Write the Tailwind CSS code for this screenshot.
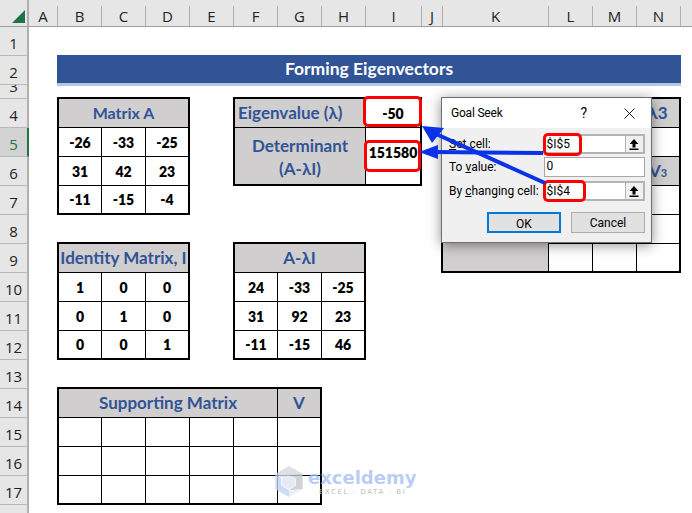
<!doctype html>
<html>
<head>
  <meta charset="UTF-8">
  <script src="https://cdn.jsdelivr.net/npm/@tailwindcss/browser@4"></script>
</head>
<body class="bg-white">

<div class="relative w-[692px] h-[513px] overflow-hidden bg-white [font-family:Lato,sans-serif] grid grid-cols-[29px_29px_repeat(7,44px)_56px_21px_106px_repeat(3,44px)_1fr] grid-rows-[27px_29px_29px_14px_repeat(14,29px)_1fr]">

  <!-- column headers -->
  <div class="row-start-1 col-start-1 bg-[#e6e6e6] border-r-2 border-b border-r-[#b0b0b0] border-b-[#9f9f9f] relative">
    <div class="absolute right-[2px] bottom-[3px] w-0 h-0 border-l-[13px] border-b-[13px] border-l-transparent border-b-[#217346]"></div>
  </div>
  <div class="row-start-1 col-start-2 flex items-center justify-center pt-[6px] bg-[#e6e6e6] border-r border-b border-r-[#b0b0b0] border-b-[#9f9f9f] text-[#222] text-[15px] [font-family:'Open_Sans',sans-serif]">A</div>
  <div class="row-start-1 col-start-3 flex items-center justify-center pt-[6px] bg-[#e6e6e6] border-r border-b border-r-[#b0b0b0] border-b-[#9f9f9f] text-[#222] text-[15px] [font-family:'Open_Sans',sans-serif]">B</div>
  <div class="row-start-1 col-start-4 flex items-center justify-center pt-[6px] bg-[#e6e6e6] border-r border-b border-r-[#b0b0b0] border-b-[#9f9f9f] text-[#222] text-[15px] [font-family:'Open_Sans',sans-serif]">C</div>
  <div class="row-start-1 col-start-5 flex items-center justify-center pt-[6px] bg-[#e6e6e6] border-r border-b border-r-[#b0b0b0] border-b-[#9f9f9f] text-[#222] text-[15px] [font-family:'Open_Sans',sans-serif]">D</div>
  <div class="row-start-1 col-start-6 flex items-center justify-center pt-[6px] bg-[#e6e6e6] border-r border-b border-r-[#b0b0b0] border-b-[#9f9f9f] text-[#222] text-[15px] [font-family:'Open_Sans',sans-serif]">E</div>
  <div class="row-start-1 col-start-7 flex items-center justify-center pt-[6px] bg-[#e6e6e6] border-r border-b border-r-[#b0b0b0] border-b-[#9f9f9f] text-[#222] text-[15px] [font-family:'Open_Sans',sans-serif]">F</div>
  <div class="row-start-1 col-start-8 flex items-center justify-center pt-[6px] bg-[#e6e6e6] border-r border-b border-r-[#b0b0b0] border-b-[#9f9f9f] text-[#222] text-[15px] [font-family:'Open_Sans',sans-serif]">G</div>
  <div class="row-start-1 col-start-9 flex items-center justify-center pt-[6px] bg-[#e6e6e6] border-r border-b border-r-[#b0b0b0] border-b-[#9f9f9f] text-[#222] text-[15px] [font-family:'Open_Sans',sans-serif]">H</div>
  <div class="row-start-1 col-start-10 flex items-center justify-center pt-[6px] bg-[#e6e6e6] border-r border-b border-r-[#b0b0b0] border-b-[#9f9f9f] text-[#222] text-[15px] [font-family:'Open_Sans',sans-serif]">I</div>
  <div class="row-start-1 col-start-11 flex items-center justify-center pt-[6px] bg-[#e6e6e6] border-r border-b border-r-[#b0b0b0] border-b-[#9f9f9f] text-[#222] text-[15px] [font-family:'Open_Sans',sans-serif]">J</div>
  <div class="row-start-1 col-start-12 flex items-center justify-center pt-[6px] bg-[#e6e6e6] border-r border-b border-r-[#b0b0b0] border-b-[#9f9f9f] text-[#222] text-[15px] [font-family:'Open_Sans',sans-serif]">K</div>
  <div class="row-start-1 col-start-13 flex items-center justify-center pt-[6px] bg-[#e6e6e6] border-r border-b border-r-[#b0b0b0] border-b-[#9f9f9f] text-[#222] text-[15px] [font-family:'Open_Sans',sans-serif]">L</div>
  <div class="row-start-1 col-start-14 flex items-center justify-center pt-[6px] bg-[#e6e6e6] border-r border-b border-r-[#b0b0b0] border-b-[#9f9f9f] text-[#222] text-[15px] [font-family:'Open_Sans',sans-serif]">M</div>
  <div class="row-start-1 col-start-15 flex items-center justify-center pt-[6px] bg-[#e6e6e6] border-r border-b border-r-[#b0b0b0] border-b-[#9f9f9f] text-[#222] text-[15px] [font-family:'Open_Sans',sans-serif]">N</div>
  <div class="row-start-1 col-start-16 bg-[#e6e6e6] border-b border-b-[#9f9f9f]"></div>
  <!-- separators don't reach the top of the header -->
  <div class="row-start-1 col-start-2 col-end-17 self-start h-[6px] bg-[#e6e6e6] z-10"></div>

  <!-- row headers -->
  <div class="row-start-2 col-start-1 flex items-center justify-center pt-[5px] bg-[#e6e6e6] border-r-2 border-b border-r-[#b0b0b0] border-b-[#b8b8b8] text-[#222] text-[15px] [font-family:'Open_Sans',sans-serif]">1</div>
  <div class="row-start-3 col-start-1 flex items-center justify-center pt-[5px] bg-[#e6e6e6] border-r-2 border-b border-r-[#b0b0b0] border-b-[#b8b8b8] text-[#222] text-[15px] [font-family:'Open_Sans',sans-serif]">2</div>
  <div class="row-start-4 col-start-1 flex items-center justify-center pb-[10px] overflow-hidden bg-[#e6e6e6] border-r-2 border-b border-r-[#b0b0b0] border-b-[#b8b8b8] text-[#222] text-[15px] [font-family:'Open_Sans',sans-serif]">3</div>
  <div class="row-start-5 col-start-1 flex items-center justify-center pt-[5px] bg-[#e6e6e6] border-r-2 border-b border-r-[#b0b0b0] border-b-[#b8b8b8] text-[#222] text-[15px] [font-family:'Open_Sans',sans-serif]">4</div>
  <div class="row-start-6 col-start-1 flex items-center justify-center pt-[5px] bg-[#d2d2d2] border-r-2 border-b border-r-[#217346] border-b-[#b8b8b8] text-[#217346] text-[15px] [font-family:'Open_Sans',sans-serif]">5</div>
  <div class="row-start-7 col-start-1 flex items-center justify-center pt-[5px] bg-[#e6e6e6] border-r-2 border-b border-r-[#b0b0b0] border-b-[#b8b8b8] text-[#222] text-[15px] [font-family:'Open_Sans',sans-serif]">6</div>
  <div class="row-start-8 col-start-1 flex items-center justify-center pt-[5px] bg-[#e6e6e6] border-r-2 border-b border-r-[#b0b0b0] border-b-[#b8b8b8] text-[#222] text-[15px] [font-family:'Open_Sans',sans-serif]">7</div>
  <div class="row-start-9 col-start-1 flex items-center justify-center pt-[5px] bg-[#e6e6e6] border-r-2 border-b border-r-[#b0b0b0] border-b-[#b8b8b8] text-[#222] text-[15px] [font-family:'Open_Sans',sans-serif]">8</div>
  <div class="row-start-10 col-start-1 flex items-center justify-center pt-[5px] bg-[#e6e6e6] border-r-2 border-b border-r-[#b0b0b0] border-b-[#b8b8b8] text-[#222] text-[15px] [font-family:'Open_Sans',sans-serif]">9</div>
  <div class="row-start-11 col-start-1 flex items-center justify-center pt-[5px] bg-[#e6e6e6] border-r-2 border-b border-r-[#b0b0b0] border-b-[#b8b8b8] text-[#222] text-[15px] [font-family:'Open_Sans',sans-serif]">10</div>
  <div class="row-start-12 col-start-1 flex items-center justify-center pt-[5px] bg-[#e6e6e6] border-r-2 border-b border-r-[#b0b0b0] border-b-[#b8b8b8] text-[#222] text-[15px] [font-family:'Open_Sans',sans-serif]">11</div>
  <div class="row-start-13 col-start-1 flex items-center justify-center pt-[5px] bg-[#e6e6e6] border-r-2 border-b border-r-[#b0b0b0] border-b-[#b8b8b8] text-[#222] text-[15px] [font-family:'Open_Sans',sans-serif]">12</div>
  <div class="row-start-14 col-start-1 flex items-center justify-center pt-[5px] bg-[#e6e6e6] border-r-2 border-b border-r-[#b0b0b0] border-b-[#b8b8b8] text-[#222] text-[15px] [font-family:'Open_Sans',sans-serif]">13</div>
  <div class="row-start-15 col-start-1 flex items-center justify-center pt-[5px] bg-[#e6e6e6] border-r-2 border-b border-r-[#b0b0b0] border-b-[#b8b8b8] text-[#222] text-[15px] [font-family:'Open_Sans',sans-serif]">14</div>
  <div class="row-start-16 col-start-1 flex items-center justify-center pt-[5px] bg-[#e6e6e6] border-r-2 border-b border-r-[#b0b0b0] border-b-[#b8b8b8] text-[#222] text-[15px] [font-family:'Open_Sans',sans-serif]">15</div>
  <div class="row-start-17 col-start-1 flex items-center justify-center pt-[5px] bg-[#e6e6e6] border-r-2 border-b border-r-[#b0b0b0] border-b-[#b8b8b8] text-[#222] text-[15px] [font-family:'Open_Sans',sans-serif]">16</div>
  <div class="row-start-18 col-start-1 flex items-center justify-center pt-[5px] bg-[#e6e6e6] border-r-2 border-b border-r-[#b0b0b0] border-b-[#b8b8b8] text-[#222] text-[15px] [font-family:'Open_Sans',sans-serif]">17</div>
  <div class="row-start-19 col-start-1 bg-[#e6e6e6] border-r-2 border-r-[#b0b0b0]"></div>

  <!-- title -->
  <div class="row-start-3 col-start-3 col-end-16 flex items-center justify-center -ml-px -mt-px h-[31px] bg-[#305496] border-b-[3px] border-[#b4c6e7] text-white font-bold text-[17.5px]">Forming Eigenvectors</div>

  <!-- Matrix A -->
  <div class="row-start-5 col-start-3 col-span-3 row-span-4 -ml-px -mt-[2px] border-2 border-black bg-black grid grid-cols-[42px_43px_42px] grid-rows-[28px_28px_28px_27px] gap-px text-[14px] font-extrabold text-black">
    <div class="col-span-3 flex items-center justify-center bg-[#d0cece] text-[#305496] font-bold text-[16px]">Matrix A</div>
    <div class="flex items-center justify-center bg-white">-26</div>
    <div class="flex items-center justify-center bg-white">-33</div>
    <div class="flex items-center justify-center bg-white">-25</div>
    <div class="flex items-center justify-center bg-white">31</div>
    <div class="flex items-center justify-center bg-white">42</div>
    <div class="flex items-center justify-center bg-white">23</div>
    <div class="flex items-center justify-center bg-white">-11</div>
    <div class="flex items-center justify-center bg-white">-15</div>
    <div class="flex items-center justify-center bg-white">-4</div>
  </div>

  <!-- Eigenvalue / determinant -->
  <div class="row-start-5 col-start-7 col-span-4 row-span-3 -ml-px -mt-[2px] border-2 border-black bg-black grid grid-cols-[130px_54px] grid-rows-[28px_56px] gap-px text-[14px] font-extrabold text-black">
    <div class="flex items-center pl-[3px] bg-[#d0cece] text-[#305496] font-bold text-[17px]">Eigenvalue (λ)</div>
    <div class="flex items-center justify-center bg-white">-50</div>
    <div class="flex items-center justify-center text-center pt-px leading-[23px] bg-[#d0cece] text-[#305496] font-bold text-[17px]">Determinant<br>(A-λI)</div>
    <div class="flex items-center justify-center pb-[8px] bg-white">151580</div>
  </div>

  <!-- table behind the dialog -->
  <div class="row-start-5 col-start-12 col-span-4 row-span-6 -ml-[2px] -mt-[2px] border-2 border-black bg-black grid grid-cols-[105px_43px_43px_42px] grid-rows-[28px_28px_28px_28px_28px_27px] gap-px font-bold text-[17px] text-[#305496]">
    <div class="bg-[#d0cece]"></div>
    <div class="flex items-center justify-center bg-[#d0cece]">λ1</div>
    <div class="flex items-center justify-center bg-[#d0cece]">λ2</div>
    <div class="flex items-center justify-center bg-[#d0cece]">λ3</div>
    <div class="bg-white"></div>
    <div class="bg-white"></div>
    <div class="bg-white"></div>
    <div class="bg-white"></div>
    <div class="bg-[#d0cece]"></div>
    <div class="flex items-center justify-center bg-[#d0cece]">V<span class="text-[11px] mt-[5px]">1</span></div>
    <div class="flex items-center justify-center bg-[#d0cece]">V<span class="text-[11px] mt-[5px]">2</span></div>
    <div class="flex items-center justify-center bg-[#d0cece]">V<span class="text-[11px] mt-[5px]">3</span></div>
    <div class="row-span-3 bg-[#d0cece]"></div>
    <div class="bg-white"></div>
    <div class="bg-white"></div>
    <div class="bg-white"></div>
    <div class="bg-white"></div>
    <div class="bg-white"></div>
    <div class="bg-white"></div>
    <div class="bg-white"></div>
    <div class="bg-white"></div>
    <div class="bg-white"></div>
  </div>

  <!-- Identity matrix -->
  <div class="row-start-10 col-start-3 col-span-3 row-span-4 -ml-px -mt-[2px] border-2 border-black bg-black grid grid-cols-[42px_43px_42px] grid-rows-[28px_28px_28px_27px] gap-px text-[14px] font-extrabold text-black">
    <div class="col-span-3 flex items-center justify-center overflow-hidden whitespace-nowrap bg-[#d0cece] text-[#305496] font-bold text-[17px]">Identity Matrix, I</div>
    <div class="flex items-center justify-center bg-white">1</div>
    <div class="flex items-center justify-center bg-white">0</div>
    <div class="flex items-center justify-center bg-white">0</div>
    <div class="flex items-center justify-center bg-white">0</div>
    <div class="flex items-center justify-center bg-white">1</div>
    <div class="flex items-center justify-center bg-white">0</div>
    <div class="flex items-center justify-center bg-white">0</div>
    <div class="flex items-center justify-center bg-white">0</div>
    <div class="flex items-center justify-center bg-white">1</div>
  </div>

  <!-- A-lambda I -->
  <div class="row-start-10 col-start-7 col-span-3 row-span-4 -ml-px -mt-[2px] border-2 border-black bg-black grid grid-cols-[42px_43px_42px] grid-rows-[28px_28px_28px_27px] gap-px text-[14px] font-extrabold text-black">
    <div class="col-span-3 flex items-center justify-center bg-[#d0cece] text-[#305496] font-bold text-[17px]">A-λI</div>
    <div class="flex items-center justify-center bg-white">24</div>
    <div class="flex items-center justify-center bg-white">-33</div>
    <div class="flex items-center justify-center bg-white">-25</div>
    <div class="flex items-center justify-center bg-white">31</div>
    <div class="flex items-center justify-center bg-white">92</div>
    <div class="flex items-center justify-center bg-white">23</div>
    <div class="flex items-center justify-center bg-white">-11</div>
    <div class="flex items-center justify-center bg-white">-15</div>
    <div class="flex items-center justify-center bg-white">46</div>
  </div>

  <!-- Supporting matrix -->
  <div class="row-start-15 col-start-3 col-span-6 row-span-4 -ml-px -mt-[2px] border-2 border-black bg-black grid grid-cols-[42px_43px_43px_43px_43px_42px] grid-rows-[28px_28px_28px_27px] gap-px font-bold text-[17px] text-[#305496]">
    <div class="col-span-5 flex items-center justify-center bg-[#d0cece]">Supporting Matrix</div>
    <div class="flex items-center justify-center bg-[#d0cece]">V</div>
    <div class="bg-white"></div><div class="bg-white"></div><div class="bg-white"></div><div class="bg-white"></div><div class="bg-white"></div><div class="bg-white"></div>
    <div class="bg-white"></div><div class="bg-white"></div><div class="bg-white"></div><div class="bg-white"></div><div class="bg-white"></div><div class="bg-white"></div>
    <div class="bg-white"></div><div class="bg-white"></div><div class="bg-white"></div><div class="bg-white"></div><div class="bg-white"></div><div class="bg-white"></div>
  </div>

  <!-- Goal Seek dialog -->
  <div class="absolute left-[441px] top-[97px] w-[211px] h-[146px] flex flex-col bg-[#f0f0f0] border border-[#6e6e6e] shadow-[0_2px_12px_rgba(0,0,0,0.45)] text-[12px] text-black [font-family:Roboto,sans-serif]">
    <div class="h-[30px] shrink-0 bg-white flex items-center pl-[9px]">
      <span class="grow tracking-[-0.2px]">Goal Seek</span>
      <span class="mr-[37px] text-[14px]">?</span>
      <svg class="mr-[16px]" width="11" height="11" viewBox="0 0 11 11"><path d="M0.5 0.5L10.5 10.5M10.5 0.5L0.5 10.5" stroke="#222" stroke-width="1" fill="none"/></svg>
    </div>
    <div class="pl-[7px] pr-[6px] pt-[6px] flex flex-col">
      <div class="flex items-center h-[20px]">
        <span class="w-[95px]"><span class="underline">S</span>et cell:</span>
        <div class="flex w-[102px] h-[20px] items-stretch bg-[#b4b4b4] p-[2px]">
          <span class="w-[79px] bg-white pl-[1px] leading-[16px]">$I$5</span>
          <span class="ml-px grow bg-[#f0f0f0] flex items-center justify-center">
            <svg width="10" height="11" viewBox="0 0 10 11"><path d="M5 0L9.5 5H6.5V8.5H3.5V5H0.5ZM0.5 9.5H9.5V11H0.5Z" fill="#000"/></svg>
          </span>
        </div>
      </div>
      <div class="flex items-center h-[20px] mt-[3px]">
        <span class="w-[95px]">To <span class="underline">v</span>alue:</span>
        <span class="w-[102px] h-[20px] bg-white border border-[#a8a8a8] pl-[2px] leading-[17px]">0</span>
      </div>
      <div class="flex items-center h-[20px] mt-[4px]">
        <span class="w-[95px] whitespace-nowrap">By <span class="underline">c</span>hanging cell:</span>
        <div class="flex w-[102px] h-[20px] items-stretch bg-[#b4b4b4] p-[2px]">
          <span class="w-[79px] bg-white pl-[1px] leading-[16px]">$I$4</span>
          <span class="ml-px grow bg-[#f0f0f0] flex items-center justify-center">
            <svg width="10" height="11" viewBox="0 0 10 11"><path d="M5 0L9.5 5H6.5V8.5H3.5V5H0.5ZM0.5 9.5H9.5V11H0.5Z" fill="#000"/></svg>
          </span>
        </div>
      </div>
      <div class="flex mt-[11px] pl-[38px]">
        <button class="w-[74px] h-[21px] pt-px bg-[#e1e1e1] border-2 border-[#0078d7]">OK</button>
        <button class="ml-[10px] w-[74px] h-[21px] pt-px bg-[#e1e1e1] border border-[#adadad]">Cancel</button>
      </div>
    </div>
  </div>

  <!-- red callouts -->
  <div class="absolute left-[363px] top-[96px] w-[59px] h-[31px] border-[3.5px] border-[#ff0000] rounded-[5px]"></div>
  <div class="absolute left-[364px] top-[140px] w-[57px] h-[32px] border-[3.5px] border-[#ff0000] rounded-[5px]"></div>
  <div class="absolute left-[543px] top-[133px] w-[39px] h-[23px] border-[3.5px] border-[#ff0000] rounded-[5px]"></div>
  <div class="absolute left-[543px] top-[180px] w-[43px] h-[22px] border-[3.5px] border-[#ff0000] rounded-[5px]"></div>

  <!-- blue arrows -->
  <svg class="absolute left-0 top-0 pointer-events-none" width="692" height="513" viewBox="0 0 692 513">
    <path d="M545 183L436 134" stroke="#0a32e6" stroke-width="4" fill="none"/>
    <path d="M422 126L444 128L432 143Z" fill="#0a32e6"/>
    <path d="M543 153L434 152" stroke="#0a32e6" stroke-width="4" fill="none"/>
    <path d="M419 152L438 145V159Z" fill="#0a32e6"/>
  </svg>

  <!-- watermark -->
  <div class="absolute left-[275px] top-[466px] flex items-start pointer-events-none">
    <svg width="28" height="31" viewBox="0 0 28 32" class="opacity-80">
      <path d="M14 0L28 8L14 13L5 11L0 8Z" fill="#d5dae2"/>
      <path d="M0 8L6 12V20L14 25V32L0 24Z" fill="#c3d3f6"/>
      <path d="M28 8V24L14 25L21 20V13L14 9Z" fill="#c4c7cc"/>
      <path d="M14 25L28 24L14 32Z" fill="#e6ebf5"/>
      <path d="M7 13L14 10L20 13V20L14 24L7 20Z" fill="#dfe6f6"/>
    </svg>
    <div class="ml-[5px] flex flex-col items-start">
      <span class="mt-[4px] text-[#a9bff2]/80 font-bold text-[18px] leading-[16px] [font-family:'DejaVu_Sans',sans-serif]">exceldemy</span>
      <span class="mt-[2px] ml-[11px] text-[#bcbcbc] text-[7px] leading-[8px] tracking-[1.6px] [font-family:'DejaVu_Sans',sans-serif]">EXCEL · DATA · BI</span>
    </div>
  </div>
</div>

</body>
</html>
